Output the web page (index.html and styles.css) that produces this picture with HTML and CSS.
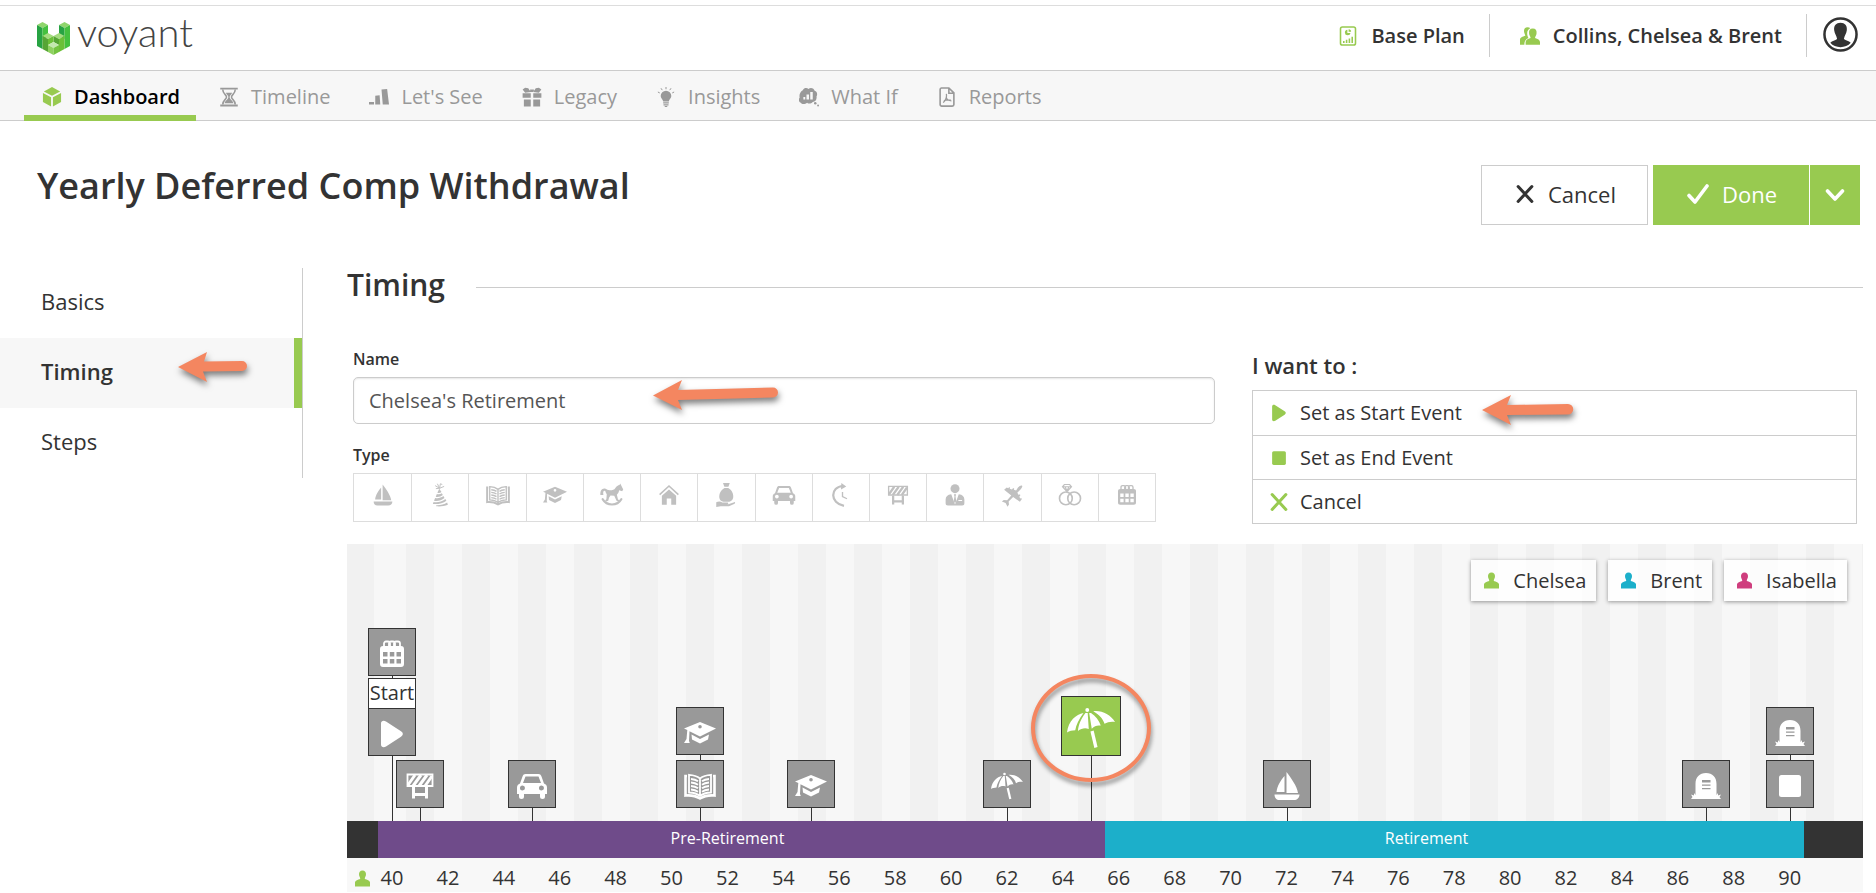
FILE: index.html
```html
<!doctype html>
<html lang="en">
<head>
  <meta charset="UTF-8">
  <meta name="viewport" content="width=device-width, initial-scale=1">
  <title>Voyant</title>
  <link rel="stylesheet" href="styles.css">
</head>
<body>
  <!-- icon sprite -->
  <svg class="sprite" aria-hidden="true">
    <symbol id="i-cube" viewBox="0 0 32 32">
      <path d="M16 0 29 7 16 14 3 7zM1.500 9.500 14.500 16.500V31L1.500 24zM30.500 9.500 17.500 16.500V31l13-7z"/>
    </symbol>
    <symbol id="i-hourglass" viewBox="0 0 32 32">
      <path d="M2 1h28v3H2zM2 28h28v3H2z"/>
      <path d="M6 4c0 7 6 8 6 12s-6 5-6 12M26 4c0 7-6 8-6 12s6 5 6 12" fill="none" stroke="currentColor" stroke-width="2.5"/>
      <path d="M11 9h10c-1 3-4 4-4 7 0 4 5 5 6 10H9c1-5 6-6 6-10 0-3-3-4-4-7z"/>
    </symbol>
    <symbol id="i-bars" viewBox="0 0 32 32">
      <path d="M0 24h8v4H0zM10 14l7-1 1 15h-8zM20 4l9-1 3 25h-10z"/>
    </symbol>
    <symbol id="i-gift" viewBox="0 0 32 32">
      <path d="M1 10h13v7H1zM18 10h13v7H18zM3 20h11v11H3zM18 20h11v11H18zM14 8 5 9 1 4l4-3 5 1zM18 8l9 1 4-5-4-3-5 1zM13 4h6v4h-6z"/>
    </symbol>
    <symbol id="i-bulb" viewBox="0 0 32 32">
      <path d="M16 6a8.500 8.500 0 0 1 8.500 8.500c0 4-3.500 5-4 8.500h-9c-.5-3.500-4-4.500-4-8.500A8.500 8.500 0 0 1 16 6zM11.500 24.500h9v2h-9zM12 27.500h8v2h-8zM14 30.500h4V32h-4z"/>
      <path d="M16 0v3.500M8 2l2 3M24 2l-2 3M3 8l3 1.500M29 8l-3 1.500" fill="none" stroke="currentColor" stroke-width="1.6"/>
    </symbol>
    <symbol id="i-whatif" viewBox="0 0 32 32">
      <path fill-rule="evenodd" d="M6 5c2-4 7-4 9-2 4-3 9-1 10 3 4 1 5 6 3 9 1 5-2 9-6 9-3 3-7 3-9 1-3 3-9 3-10 0-4-1-4-6-2-8-1-5 1-10 5-12zM7 16h3v4H7zM12 12h4v8h-4zM18 8h4v12h-4z"/>
      <circle cx="26" cy="26" r="2"/><circle cx="30.5" cy="29.5" r="1.5"/>
    </symbol>
    <symbol id="i-pdf" viewBox="0 0 32 32">
      <path d="M7 1.500h12l8 8V28a2.500 2.500 0 0 1-2.500 2.500h-17A2.500 2.500 0 0 1 5 28V4a2.500 2.500 0 0 1 2-2.500zM19 2v8h8" fill="none" stroke="currentColor" stroke-width="2.6"/>
      <path d="M15 11c1 5 0 9-5 14M15 17c1 3 4 5 8 5M11 22c4-2 7-2 11-1" fill="none" stroke="currentColor" stroke-width="2"/>
    </symbol>
    <symbol id="i-plan" viewBox="0 0 32 32">
      <rect x="4" y="1.5" width="24" height="29" rx="3" fill="none" stroke="currentColor" stroke-width="2.5"/>
      <path d="M15 6a4.500 4.500 0 1 0 5 5h-5zM17 5v4h4a4 4 0 0 0-4-4zM8 24h2.500v3H8zM12.500 22H15v5h-2.500zM17 20h2.500v7H17zM21.500 17H24v10h-2.500z"/>
    </symbol>
    <symbol id="i-people" viewBox="0 0 32 32">
      <path d="M12 2c-4 0-6 3-5.500 7 .3 2.500 1.500 4 2 6.500C4 17 0 18 0 22v8h7c0-6 2-9 6.500-11-1-2-2-4-2-8 0-3 2-6 5-7.500-1-1-2.500-1.500-4.500-1.500z"/>
      <path d="M20.500 4c-4.500 0-6.500 3-6 7.500.3 3.500 2 4.500 2.500 7.500-4.500 1.500-8 3-8 6.500V30h23v-4.500c0-3.500-3.500-5-8-6.500.5-3 2.200-4 2.500-7.500.5-4.500-1.500-7.500-6-7.500z"/>
    </symbol>
    <symbol id="i-person" viewBox="0 0 16 17">
      <path d="M8 0c2.500 0 4 1.800 3.700 4.500C11.500 6.500 10.500 7 10.400 9 13 10 15.500 10.300 16 12.500V17H0v-4.500C.5 10.300 3 10 5.600 9 5.500 7 4.500 6.500 4.300 4.500 4 1.800 5.500 0 8 0z"/>
    </symbol>
    <symbol id="i-avatar" viewBox="0 0 36 36">
      <circle cx="18" cy="18" r="16.5" fill="none" stroke="currentColor" stroke-width="2.6"/>
      <path d="M18 6c4.500 0 7 3 6.500 7.500C24 17.500 22 19 21.500 22.500c2 1.800 5 1.700 7 4C26 29.500 22 31 18 31s-8-1.500-10.500-4.500c2-2.300 5-2.200 7-4C14 19 12 17.500 11.500 13.500 11 9 13.500 6 18 6z"/>
    </symbol>
    <symbol id="i-cross" viewBox="0 0 16 16">
      <path d="M2.500 2 13.500 14M13.500 2 2.500 14" fill="none" stroke="currentColor" stroke-width="2.4" stroke-linecap="round"/>
    </symbol>
    <symbol id="i-check" viewBox="0 0 22 20">
      <path d="M2 11.500 8 18 20 2" fill="none" stroke="currentColor" stroke-width="3.6" stroke-linejoin="round" stroke-linecap="round"/>
    </symbol>
    <symbol id="i-chevron" viewBox="0 0 20 14">
      <path d="M2.500 3 10 11 17.500 3" fill="none" stroke="currentColor" stroke-width="3.6" stroke-linecap="round" stroke-linejoin="round"/>
    </symbol>
    <symbol id="i-play" viewBox="0 0 32 32">
      <path d="M5 5.500C5 3 7.500 2 10 3.500l15 9.800c2.500 1.600 2.500 3.800 0 5.400L10 28.500C7.500 30 5 29 5 26.500z"/>
    </symbol>
    <symbol id="i-stop" viewBox="0 0 32 32"><rect x="5" y="5" width="22" height="22" rx="2.5"/></symbol>
    <symbol id="i-boat" viewBox="0 0 32 32">
      <path d="M15.500 2C20 8 26 16 27 23H15.500zM13.500 6v16H5.500C6 16 10 10 13.500 6zM3.500 24.500h25c0 3.500-2.500 5.500-5.500 5.500H8.500c-3 0-5-2-5-5.500z"/>
    </symbol>
    <symbol id="i-party" viewBox="0 0 32 32">
      <path d="M15 7.500 12.500 13c2 .7 4 .2 5.500-1zM11.800 14.500l-1.500 3.800c3.500.7 7-.2 9.500-2.300l-1.300-2.500c-2 1.300-4 1.700-6.700 1zM9.500 20l-1.500 3.700c5 .9 10-.4 14-3.700l-1.400-2.600c-3.500 2.500-7 3.400-11.100 2.600zM7.400 25.300 6.500 28c7 .7 13.500-1 18-4.500l-1.300-2.300c-5 3.600-10 5-15.800 4.100zM11 29.500c5.500.2 10.500-1 14.500-3.500l1 3c-5 2-10.500 2.500-15.500 2z"/>
      <path d="M15.500 7 9.500 3.500M15.500 7l-3-6M15.500 7l1-6 2.500 1M15.500 7l6-2.500M15.500 7l-5 .5" fill="none" stroke="currentColor" stroke-width="1.3"/>
    </symbol>
    <symbol id="i-book" viewBox="0 0 32 32">
      <path d="M3 6H1.500v19.500C7 25 12 26 16 28.500 20 26 25 25 30.500 25.500V6H29" fill="none" stroke="currentColor" stroke-width="2.6"/>
      <path d="M16 8.500C13 6 9 5 5 4.800V22.500c4 .2 8 1 11 3.500 3-2.500 7-3.300 11-3.500V4.800C23 5 19 6 16 8.500zM16 8.500V26" fill="none" stroke="currentColor" stroke-width="1.8"/>
      <path d="M7 9c3 .2 5 .8 7 2.200M7 12.500c3 .2 5 .8 7 2.200M7 16c3 .2 5 .8 7 2.200M7 19.500c3 .2 5 .8 7 2.200M25 9c-3 .2-5 .8-7 2.200M25 12.500c-3 .2-5 .8-7 2.200M25 16c-3 .2-5 .8-7 2.200M25 19.500c-3 .2-5 .8-7 2.200" fill="none" stroke="currentColor" stroke-width="1.9"/>
    </symbol>
    <symbol id="i-cap" viewBox="0 0 32 32">
      <path fill-rule="evenodd" d="M16 5 32 11.500 16 19.500 5.500 14.200 5 24 5.800 26H0l2.500-4 .8-9L0 11.500zM16 8a1.800 1.800 0 1 0 0 3.600A1.800 1.800 0 0 0 16 8z"/>
      <path d="M7.500 17.500 16 22l9-4.500-1 5L16 26.500l-8-4z"/>
    </symbol>
    <symbol id="i-horse" viewBox="0 0 32 32">
      <path d="M.5 16C0 10 3 6 7.500 7.500c2 .6 2.500 2 5.500 2 4 0 6-.5 7.500-3C22 4 24 3 26 2.500L27 .5l1.500 3 2.500 5-1.500 2.500-4-1.300c-.5 3-1.500 4.500-3 5.800L24 22l2 1-1 2-3-1.500-3-6.500-5-.5-2 3-1 4-3.500 1.500-.5-2 1.500-1.500.5-6.500c-1-1.500-1.500-3-2-4.500-3-.5-3 2-2.500 5.500z"/>
      <path d="M3.500 21.500C9 31 23 31 28.500 21.500" fill="none" stroke="currentColor" stroke-width="2.8" stroke-linecap="round"/>
    </symbol>
    <symbol id="i-house" viewBox="0 0 32 32">
      <path d="M3.500 15.500 16 4l12.500 11.500" fill="none" stroke="currentColor" stroke-width="2.2"/>
      <path d="M16 8.500 25.500 17v12H19v-8.500h-6V29H6.500V17z"/>
    </symbol>
    <symbol id="i-bag" viewBox="0 0 32 32">
      <path d="M12 0h9l-1.800 5h-5.400zM14 6.500h5c5.500 3 7.500 9 6.500 13.500-.7 3-3 4.500-5 5h-8c-3-.5-5-2.500-5.300-5C6.500 15 8.500 9.500 14 6.500zM3 25.500c3-1 6-1 8 .5h7c1.500 0 1.500 2 0 2.200h-4 5L27 25.500c1.500-.5 1.500 1 .5 2L20 31H9l-6 1z"/>
    </symbol>
    <symbol id="i-car" viewBox="0 0 32 32">
      <path fill-rule="evenodd" d="M9.500 4h13c1.500 0 2.300.7 2.800 2l2.700 7.500c2 .7 3 2 3 4V24h-2v2.500a2.500 2.500 0 0 1-5 0V24H8v2.500a2.500 2.500 0 0 1-5 0V24H1v-6.500c0-2 1-3.300 3-4L6.700 6c.5-1.300 1.300-2 2.800-2zM9.500 6.500 7 13h18l-2.500-6.500zM6.500 15.500a2.500 2.500 0 1 0 0 5 2.500 2.500 0 0 0 0-5zM25.500 15.500a2.500 2.500 0 1 0 0 5 2.500 2.500 0 0 0 0-5z"/>
    </symbol>
    <symbol id="i-clock" viewBox="0 0 32 32">
      <path d="M19 4C1 5 1 27 20 30.500" fill="none" stroke="currentColor" stroke-width="3"/>
      <path d="M16.500 0 23 4.500l-7 4z"/>
      <path d="M18 12v6l6 3" fill="none" stroke="currentColor" stroke-width="1.8"/>
    </symbol>
    <symbol id="i-barrier" viewBox="0 0 32 32">
      <path d="M3.500 4.500h25V16h-25z" fill="none" stroke="currentColor" stroke-width="1.8"/>
      <path d="M4 15 11 5M9 16l8-11M15 16l8-11M21 16l7-10" fill="none" stroke="currentColor" stroke-width="3"/>
      <path d="M8 17h3v6h10v-6h3v11.500h-3V26H11v2.500H8z"/>
    </symbol>
    <symbol id="i-suit" viewBox="0 0 32 32">
      <circle cx="16" cy="7.5" r="6"/>
      <path fill-rule="evenodd" d="M11 15l5 13.500L21 15c5 .5 7.500 3 7.500 7v5c0 2-1 3-3 3h-19c-2 0-3-1-3-3v-5c0-4 2.500-6.500 7.500-7zM20.500 24h5v-1.500h-5z"/>
      <path d="M14.500 15h3l-.8 3 1 6L16 27l-1.700-3 1-6z"/>
    </symbol>
    <symbol id="i-plane" viewBox="0 0 32 32">
      <path d="M29.500 3.500c1 1.500-1 4-2.500 5.500l-4 4 2 3 1.500-1 .7 1.300-1.400 2 1.200 2.500 1.500-.8.500 1.500-2.500 3.500-9-6.500-6 6 .5 4-2 3-2.500-5-5-2 2.500-2 4.500.5 5.500-6.500L5.500 9 9 6l2 1 1-1.500 1.500.5-.5 1.500 3 1 1.500-1.700 1.500.7-.5 1.500 3 1L24 6c2-2 4-3.500 5.500-2.500z"/>
    </symbol>
    <symbol id="i-rings" viewBox="0 0 32 32">
      <circle cx="10.500" cy="20.5" r="8.5" fill="none" stroke="currentColor" stroke-width="2.2"/>
      <circle cx="21.5" cy="20.5" r="8.5" fill="none" stroke="currentColor" stroke-width="2.2"/>
      <path d="M8.500 2h7L18 5l-6 6.500L6 5zM6.500 5h11M9.500 5l2.500 6 2.500-6" fill="none" stroke="currentColor" stroke-width="1.6"/>
    </symbol>
    <symbol id="i-calendar" viewBox="0 0 32 32">
      <path fill-rule="evenodd" d="M7 8h18c2 0 3 1 3 3v15c0 2-1 3-3 3H7c-2 0-3-1-3-3V11c0-2 1-3 3-3zM7 14V18.500h4.500V14zM13.800 14V18.500h4.500V14zM20.500 14V18.500H25V14zM7 21V25.500h4.500V21zM13.800 21V25.500h4.500V21zM20.500 21V25.500H25V21z"/>
      <path d="M8 10V5.500a2 2 0 0 1 2-2h2a2 2 0 0 1 2 2V10M13 10V5.500a2 2 0 0 1 2-2h2a2 2 0 0 1 2 2V10M18 10V5.500a2 2 0 0 1 2-2h2a2 2 0 0 1 2 2V10" fill="none" stroke="currentColor" stroke-width="1.8"/>
    </symbol>
    <symbol id="i-umbrella" viewBox="0 0 32 32">
      <path d="M0 19C1 11 6 7 11 6 8 10 6 14 5.500 17.500 3.500 17.600 1.500 18 0 19zM12.300 6C9.500 9.500 7.500 14 7.300 18c2.200-1.800 4.700-2.400 7.200-1.400L13.800 6zM14.800 6l1.700 10.500c2-1.900 3.500-2.500 6-2.100C21.500 11 19 8 16 6zM17.500 4.800C22 7.500 24 10 25 13.200c2-1.200 4.500-1.600 7-1.200C29 7 23 4 17.500 4.800z"/>
      <circle cx="13.5" cy="4" r="1.3"/>
      <path d="M16.700 18 19.300 29" fill="none" stroke="currentColor" stroke-width="2.2"/>
    </symbol>
    <symbol id="i-grave" viewBox="0 0 32 32">
      <path fill-rule="evenodd" d="M1 29l1.500-2L1 24.500l3 1V23l1.500 2V14c0-7 4-11 10.500-11s10.500 4 10.500 11v11l1.500-2v2.500l3-1-1.500 2.500L31 29zM12 10v2.500h8.500V10zM12 14.500v1.300h8.500v-1.300zM12 18v1.300h8.500V18z"/>
    </symbol>
  </svg>

  <header class="header">
    <a class="logo" href="#">
      <svg class="logo-mark" viewBox="0 0 33 33" aria-hidden="true">
        <path fill="#8fd56c" d="M0 3 5.500 0 11 3 5.500 6zM22 3 27.500 0 33 3 27.500 6z"/>
        <path fill="#27a343" d="M0 3 5.500 6V27L0 24zM22 3 27.500 6V17L22 14z"/>
        <path fill="#45c03f" d="M5.500 6 11 3V15L5.500 18zM27.500 6 33 3V24l-5.500 3z"/>
        <path fill="#a5dc80" d="M5.500 14 11 11l5.500 3L11 17zM16.500 14 22 11l5.500 3L22 17z"/>
        <path fill="#56a535" d="M5.500 14 11 17V30l-5.500-3zM16.500 14 22 17v6l-5.500-3z"/>
        <path fill="#6cc038" d="M11 17l5.500-3v6L11 23zM22 17l5.500-3V27L22 30z"/>
        <path fill="#c3e8ae" d="M11 23l5.500-3 5.500 3-5.500 3z"/>
        <path fill="#8ed160" d="M11 23l5.500 3v7L11 30z"/>
        <path fill="#74c341" d="M22 23l-5.500 3v7l5.500-3z"/>
      </svg>
      <span class="logo-text">voyant</span>
    </a>
    <div class="account">
      <a class="account-item" href="#"><svg class="icon green"><use href="#i-plan"/></svg>Base Plan</a>
      <a class="account-item" href="#"><svg class="icon green"><use href="#i-people"/></svg>Collins, Chelsea &amp; Brent</a>
      <a class="avatar" href="#" aria-label="Account"><svg><use href="#i-avatar"/></svg></a>
    </div>
  </header>

  <nav class="nav">
    <a class="nav-item active" href="#"><svg class="icon"><use href="#i-cube"/></svg>Dashboard</a>
    <a class="nav-item" href="#"><svg class="icon"><use href="#i-hourglass"/></svg>Timeline</a>
    <a class="nav-item" href="#"><svg class="icon"><use href="#i-bars"/></svg>Let's See</a>
    <a class="nav-item" href="#"><svg class="icon"><use href="#i-gift"/></svg>Legacy</a>
    <a class="nav-item" href="#"><svg class="icon"><use href="#i-bulb"/></svg>Insights</a>
    <a class="nav-item" href="#"><svg class="icon"><use href="#i-whatif"/></svg>What If</a>
    <a class="nav-item" href="#"><svg class="icon"><use href="#i-pdf"/></svg>Reports</a>
  </nav>

  <div class="title-bar">
    <h1>Yearly Deferred Comp Withdrawal</h1>
    <div class="buttons">
      <button class="btn" type="button"><svg class="btn-icon"><use href="#i-cross"/></svg>Cancel</button>
      <div class="split">
        <button class="btn primary" type="button"><svg class="btn-icon check"><use href="#i-check"/></svg>Done</button>
        <button class="btn primary more" type="button" aria-label="More options"><svg class="btn-icon"><use href="#i-chevron"/></svg></button>
      </div>
    </div>
  </div>

  <div class="page">
    <aside class="steps">
      <a class="step" href="#">Basics</a>
      <a class="step current" href="#">Timing
        <svg class="arrow arrow-step" viewBox="0 0 69 30"><path d="M0 15 29 0 26 9.500 64 9a5 5 0 0 1 0 10L25 19.500 29 30z"/></svg>
      </a>
      <a class="step" href="#">Steps</a>
    </aside>

    <main class="main">
      <h2 class="section-title">Timing</h2>

      <div class="form">
        <div class="fields">
          <label class="label" for="name">Name</label>
          <div class="input-wrap">
            <input class="input" id="name" type="text" value="Chelsea's Retirement">
            <svg class="arrow arrow-name" viewBox="0 0 126 30"><path d="M0 15.500 29 0 25 10 120 7.500a5 5 0 0 1 0 10L25 20 29 30z"/></svg>
          </div>
          <div class="label" id="type-label">Type</div>
          <div class="types" role="group" aria-labelledby="type-label">
            <button class="type" type="button" aria-label="Leisure"><svg><use href="#i-boat"/></svg></button>
            <button class="type" type="button" aria-label="Birthday"><svg><use href="#i-party"/></svg></button>
            <button class="type" type="button" aria-label="School"><svg><use href="#i-book"/></svg></button>
            <button class="type" type="button" aria-label="Graduation"><svg><use href="#i-cap"/></svg></button>
            <button class="type" type="button" aria-label="Child"><svg><use href="#i-horse"/></svg></button>
            <button class="type" type="button" aria-label="Home"><svg><use href="#i-house"/></svg></button>
            <button class="type" type="button" aria-label="Inheritance"><svg><use href="#i-bag"/></svg></button>
            <button class="type" type="button" aria-label="Car"><svg><use href="#i-car"/></svg></button>
            <button class="type" type="button" aria-label="Time"><svg><use href="#i-clock"/></svg></button>
            <button class="type" type="button" aria-label="Milestone"><svg><use href="#i-barrier"/></svg></button>
            <button class="type" type="button" aria-label="Job"><svg><use href="#i-suit"/></svg></button>
            <button class="type" type="button" aria-label="Travel"><svg><use href="#i-plane"/></svg></button>
            <button class="type" type="button" aria-label="Wedding"><svg><use href="#i-rings"/></svg></button>
            <button class="type" type="button" aria-label="Date"><svg><use href="#i-calendar"/></svg></button>
          </div>
        </div>

        <div class="actions">
          <h3 class="actions-title">I want to :</h3>
          <div class="action-list">
            <button class="action" type="button"><svg class="action-icon"><use href="#i-play"/></svg>Set as Start Event
              <svg class="arrow arrow-action" viewBox="0 0 91 30"><path d="M0 15 29 0 25 10 86 9a5 5 0 0 1 0 10.500L25 20 29 30z"/></svg>
            </button>
            <button class="action" type="button"><svg class="action-icon"><use href="#i-stop"/></svg>Set as End Event</button>
            <button class="action" type="button"><svg class="action-icon"><use href="#i-cross"/></svg>Cancel</button>
          </div>
        </div>
      </div>

      <section class="timeline">
        <div class="plot">
          <div class="legend">
            <button class="chip" type="button"><svg class="person green"><use href="#i-person"/></svg>Chelsea</button>
            <button class="chip" type="button"><svg class="person blue"><use href="#i-person"/></svg>Brent</button>
            <button class="chip" type="button"><svg class="person pink"><use href="#i-person"/></svg>Isabella</button>
          </div>

          <!-- left = (age - 39.5) / 51 -->
          <div class="events">
            <div class="event high" style="left: 0.980%">
              <div class="node"><svg><use href="#i-calendar"/></svg></div>
              <div class="start"><span class="start-label">Start</span><div class="node"><svg><use href="#i-play"/></svg></div></div>
            </div>
            <div class="event" style="left: 2.941%"><div class="node"><svg><use href="#i-barrier"/></svg></div></div>
            <div class="event" style="left: 10.784%"><div class="node"><svg><use href="#i-car"/></svg></div></div>
            <div class="event" style="left: 22.549%">
              <div class="node"><svg><use href="#i-cap"/></svg></div>
              <div class="node"><svg><use href="#i-book"/></svg></div>
            </div>
            <div class="event" style="left: 30.392%"><div class="node"><svg><use href="#i-cap"/></svg></div></div>
            <div class="event" style="left: 44.118%"><div class="node"><svg><use href="#i-umbrella"/></svg></div></div>
            <div class="event high" style="left: 50%">
              <div class="node selected"><svg><use href="#i-umbrella"/></svg></div>
              <div class="ring"></div>
            </div>
            <div class="event" style="left: 63.725%"><div class="node"><svg><use href="#i-boat"/></svg></div></div>
            <div class="event" style="left: 93.137%"><div class="node"><svg><use href="#i-grave"/></svg></div></div>
            <div class="event" style="left: 99.020%">
              <div class="node"><svg><use href="#i-grave"/></svg></div>
              <div class="node"><svg><use href="#i-stop"/></svg></div>
            </div>
          </div>
        </div>

        <div class="stages">
          <div class="stage pre">Pre-Retirement</div>
          <div class="stage post">Retirement</div>
        </div>

        <div class="axis">
          <svg class="person green"><use href="#i-person"/></svg>
          <div class="ages">
            <span>40</span><span>42</span><span>44</span><span>46</span><span>48</span><span>50</span><span>52</span><span>54</span><span>56</span><span>58</span><span>60</span><span>62</span><span>64</span><span>66</span><span>68</span><span>70</span><span>72</span><span>74</span><span>76</span><span>78</span><span>80</span><span>82</span><span>84</span><span>86</span><span>88</span><span>90</span>
          </div>
        </div>
      </section>
    </main>
  </div>
</body>
</html>
```
FILE: styles.css
```css
* {
  box-sizing: border-box;
}
body {
  margin: 0;
  background: #fff;
  color: #333;
  font-family: "Open Sans", "Noto Sans", sans-serif;
  font-size: 20px;
  line-height: 28px;
}
a {
  color: inherit;
  text-decoration: none;
}
button,
input {
  font: inherit;
  color: inherit;
}
button {
  padding: 0;
  border: 0;
  background: none;
  cursor: pointer;
}
svg {
  display: block;
  flex: none;
  fill: currentColor;
}
.sprite {
  position: absolute;
  width: 0;
  height: 0;
}
.icon {
  width: 20px;
  height: 20px;
}
.green {
  color: #98ca50;
}
.blue {
  color: #1cafca;
}
.pink {
  color: #cf3e7e;
}

/* header */
.header {
  display: flex;
  justify-content: space-between;
  margin-top: 5px;
  height: 66px;
  padding: 0 18px 0 37px;
  border-top: 1px solid #ddd;
  border-bottom: 1px solid #ccc;
}
.logo {
  display: flex;
  align-items: flex-start;
  gap: 7px;
  padding-top: 4px;
}
.logo-mark {
  width: 33px;
  height: 33px;
  margin-top: 12px;
}
.logo-text {
  font-family: Lato, sans-serif;
  font-size: 40px;
  font-weight: 300;
  line-height: 44px;
  color: #444;
}
.account {
  display: flex;
  align-items: flex-start;
  padding-top: 8px;
  font-weight: 600;
}
.account-item {
  display: flex;
  align-items: center;
  gap: 13px;
  height: 43px;
  padding: 0 24px 0 30px;
  border-right: 1px solid #ccc;
}
.avatar {
  padding: 3px 0 0 16px;
}
.avatar svg {
  width: 35px;
  height: 35px;
}

/* nav */
.nav {
  display: flex;
  gap: 5px;
  height: 50px;
  padding-left: 24px;
  border-bottom: 1px solid #ccc;
  background: #f7f7f7;
  color: #999;
}
.nav-item {
  display: flex;
  align-items: center;
  gap: 12px;
  height: 50px;
  padding: 7px 16px 0 18px;
  border-bottom: 6px solid transparent;
}
.nav-item.active {
  border-bottom-color: #98ca50;
  color: #000;
  font-weight: 600;
}
.nav-item.active .icon {
  color: #98ca50;
}

/* title */
.title-bar {
  display: flex;
  justify-content: space-between;
  align-items: flex-start;
  padding: 44px 16px 43px 37px;
}
h1 {
  margin: 0;
  font-size: 36px;
  font-weight: 600;
  line-height: 42px;
}
.buttons,
.split {
  display: flex;
}
.buttons {
  gap: 5px;
}
.split {
  gap: 1px;
}
.btn {
  display: flex;
  align-items: center;
  gap: 13px;
  height: 60px;
  padding: 0 31px 3px 33px;
  border: 1px solid #ccc;
  font-size: 22px;
}
.btn.primary {
  padding: 0 31px 3px 33px;
  border-color: #98ca50;
  background: #98ca50;
  color: #fff;
}
.btn.primary.more {
  padding: 0 14px;
}
.btn-icon {
  width: 20px;
  height: 20px;
}
.btn-icon.check {
  width: 22px;
}
.more .btn-icon {
  height: 14px;
}

/* side steps */
.page {
  display: flex;
  align-items: flex-start;
}
.steps {
  flex: none;
  width: 303px;
  border-right: 1px solid #ccc;
  font-size: 22px;
}
.step {
  display: block;
  position: relative;
  height: 70px;
  padding-left: 41px;
  line-height: 66px;
}
.step.current {
  border-right: 8px solid #98ca50;
  background: #f7f7f7;
  font-weight: 600;
}

/* callouts */
.arrow {
  position: absolute;
  height: 30px;
  fill: #f48660;
  filter: drop-shadow(1px 4px 3px rgba(0, 0, 0, 0.5));
  overflow: visible;
  pointer-events: none;
}
.arrow-step {
  top: 14px;
  left: 178px;
  width: 69px;
}
.arrow-name {
  top: 3px;
  left: 300px;
  width: 126px;
}
.arrow-action {
  top: 4px;
  left: 229px;
  width: 91px;
}

/* main */
.main {
  flex: 1;
  min-width: 0;
  margin: 0 13px 0 44px;
}
.section-title {
  display: flex;
  align-items: flex-start;
  gap: 31px;
  margin: 0;
  font-size: 30px;
  font-weight: 600;
  line-height: 34px;
}
.section-title::after {
  content: "";
  flex: 1;
  margin-top: 19px;
  border-top: 1px solid #ccc;
}
.form {
  display: grid;
  grid-template-columns: 862fr 605fr;
  gap: 37px;
  margin: 47px 6px 20px;
}
.label {
  display: block;
  margin-bottom: 8px;
  font-size: 16px;
  font-weight: 600;
  line-height: 20px;
}
.input-wrap {
  position: relative;
  margin-bottom: 21px;
}
.input {
  display: block;
  width: 100%;
  height: 47px;
  padding: 0 15px;
  border: 1px solid #ccc;
  border-radius: 5px;
  box-shadow: inset 0 1px 2px rgba(0, 0, 0, 0.1);
  color: #555;
}
.types {
  display: grid;
  grid-template-columns: repeat(14, 1fr);
  max-width: 803px;
  border: 1px solid #ddd;
}
.type {
  display: flex;
  justify-content: center;
  height: 47px;
  padding-top: 9px;
  color: #c0c0c0;
}
.type + .type {
  border-left: 1px solid #ddd;
}
.type svg {
  width: 24px;
  height: 24px;
}
.actions {
  padding-top: 2px;
}
.actions-title {
  margin: 0 0 11px;
  font-size: 22px;
  font-weight: 600;
  line-height: 28px;
}
.action-list {
  border: 1px solid #ccc;
}
.action {
  display: flex;
  align-items: center;
  gap: 11px;
  position: relative;
  width: 100%;
  height: 44px;
  padding-left: 16px;
}
.action + .action {
  border-top: 1px solid #ccc;
}
.action-icon {
  width: 20px;
  height: 20px;
  color: #98ca50;
}

/* timeline */
.plot {
  position: relative;
  min-height: 277px;
  background: repeating-linear-gradient(to right, #f7f7f7 0 28px, #f1f1f1 28px 56px);
  background-position: 31px 0;
}
.legend {
  display: flex;
  gap: 12px;
  position: absolute;
  top: 16px;
  right: 16px;
}
.chip {
  display: flex;
  align-items: center;
  gap: 14px;
  height: 41px;
  padding: 0 10px 0 13px;
  background: rgba(255, 255, 255, 0.8);
  box-shadow: 0 1px 4px rgba(0, 0, 0, 0.4);
}
.person {
  width: 15px;
  height: 17px;
}
.events {
  position: absolute;
  top: 0;
  bottom: 0;
  left: 31px;
  right: 59px;
}
.event {
  display: flex;
  flex-direction: column;
  align-items: center;
  gap: 5px;
  position: absolute;
  bottom: 0;
  padding-bottom: 13px;
  transform: translateX(-50%);
}
.event.high {
  gap: 2px;
  padding-bottom: 65px;
}
/* pole */
.event::before {
  content: "";
  position: absolute;
  top: 0;
  bottom: 0;
  left: 50%;
  width: 1px;
  background: #333;
}
.node {
  display: flex;
  align-items: center;
  justify-content: center;
  position: relative;
  width: 48px;
  height: 48px;
  padding-top: 3px;
  border: 1px solid #333;
  background: #999;
  color: #fff;
}
.node svg {
  width: 32px;
  height: 32px;
}
.start {
  position: relative;
}
.start-label {
  display: block;
  height: 30px;
  border: 1px solid #333;
  border-bottom: 0;
  background: #fff;
  text-align: center;
}
.node.selected {
  width: 60px;
  height: 60px;
  background: #98ca50;
}
.selected svg {
  width: 48px;
  height: 48px;
}
.ring {
  position: absolute;
  top: -22px;
  left: 50%;
  width: 120px;
  height: 108px;
  border: 4px solid #f48660;
  border-radius: 50%;
  filter: drop-shadow(1px 4px 2px rgba(0, 0, 0, 0.4));
  transform: translateX(-50%);
}
.stages {
  display: grid;
  grid-template-columns: 26fr 25fr;
  padding: 0 59px 0 31px;
  background: #333;
}
.stage {
  height: 37px;
  color: #fff;
  font-size: 16px;
  line-height: 35px;
  text-align: center;
}
.pre {
  padding-right: 28px;
  background: #6f4b8a;
}
.post {
  padding-right: 56px;
  background: #1cafca;
}
.axis {
  display: flex;
  align-items: center;
  height: 34px;
  padding: 6px 59px 0 8px;
  background: #f8f8f8;
}
.ages {
  display: flex;
  flex: 1;
  justify-content: space-between;
  margin-left: 8px;
}
.ages span {
  width: 28px;
  text-align: center;
}
```
